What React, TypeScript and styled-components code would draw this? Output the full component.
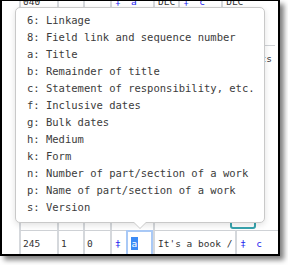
import { createGlobalStyle, styled } from "styled-components";

const GlobalStyle = createGlobalStyle`
  html, body {
    margin: 0;
    padding: 0;
    background: #fff;
  }
  body {
    font-family: "DejaVu Sans Mono", "Liberation Mono", monospace;
  }
`;

const Page = styled.div`
  width: 288px;
  height: 265px;
  overflow: hidden;
  background: #fff;
`;

const Frame = styled.div`
  position: relative;
  width: 280px;
  height: 256px;
  box-sizing: border-box;
  border: 2px solid #000;
  border-top-width: 1px;
  background: #fff;
  overflow: hidden;
  box-shadow: 4px 4px 5px rgba(0, 0, 0, 0.5);
`;

const Rows = styled.div`
  display: flex;
  flex-direction: column;
  margin-top: -13px;
  font-family: "DejaVu Sans Mono", "Liberation Mono", monospace;
  font-size: 9.5px;
  color: #333;
`;

const Row = styled.div<{ $h: number }>`
  display: flex;
  height: ${(p) => p.$h}px;
  padding-left: 17px;
  box-sizing: border-box;
`;

const Cell = styled.div<{ $w?: number }>`
  display: flex;
  align-items: center;
  flex: none;
  box-sizing: border-box;
  width: ${(p) => (p.$w ? `${p.$w}px` : "auto")};
  border-top: 1px solid #cfd2d6;
  border-left: 2px solid #d5d8dc;
  padding: 0 3px 0 2px;
  white-space: pre;
`;

const Delim = styled(Cell)`
  width: 16px;
  padding-left: 3px;
  color: #1f1ff0;
`;

const Code = styled(Cell)<{ $focus?: boolean }>`
  width: 27px;
  border-left: none;
  padding-left: 5px;
  color: #1f1ff0;
  outline: ${(p) => (p.$focus ? "2px solid #a9c9f6" : "none")};
  outline-offset: -2px;
`;

const Value = styled(Cell)`
  padding: 0 3px;
`;

const Selected = styled.span`
  display: inline-block;
  height: 13px;
  line-height: 13px;
  padding: 0 0.5px;
  background: #3b8bf6;
  color: #fff;
`;

const AddButton = styled.div`
  flex: none;
  align-self: flex-end;
  width: 26px;
  height: 21px;
  margin-bottom: 1px;
  box-sizing: border-box;
  border: 2px solid #37a4ae;
  border-radius: 3px;
`;

const Popup = styled.div`
  position: absolute;
  left: 13px;
  top: 6px;
  width: 250px;
  box-sizing: border-box;
  padding: 4px 11px 6px;
  background: #fff;
  border: 1px solid #c9c9c9;
  border-radius: 5px;
  box-shadow: 0 2px 6px rgba(0, 0, 0, 0.12);
  font-family: "DejaVu Sans Mono", "Liberation Mono", monospace;
  font-size: 10.5px;
  line-height: 17px;
  color: #3c3c3c;

  &::before,
  &::after {
    content: "";
    position: absolute;
    top: 100%;
    width: 0;
    height: 0;
    border-style: solid;
    border-color: transparent;
  }
  &::before {
    left: 117px;
    border-width: 7px 7px 0;
    border-top-color: #c9c9c9;
  }
  &::after {
    left: 118px;
    border-width: 6px 6px 0;
    border-top-color: #fff;
  }
`;

const Option = styled.div`
  white-space: pre;
`;

type Sub = { code: string; value: string; focus?: boolean };
type Field = {
  tag: string;
  i1: string;
  i2: string;
  h: number;
  subs: Sub[];
  add?: boolean;
};

const fields: Field[] = [
  { tag: "040", i1: "", i2: "", h: 26, subs: [{ code: "a", value: "DLC" }, { code: "c", value: "DLC" }] },
  { tag: "042", i1: "", i2: "", h: 31, subs: [{ code: "a", value: "pcc" }] },
  { tag: "050", i1: "0", i2: "0", h: 26, subs: [{ code: "a", value: "PZ7" }, { code: "b", value: "Receipts" }] },
  { tag: "082", i1: "0", i2: "4", h: 26, subs: [{ code: "a", value: "813/.54" }, { code: "2", value: "23" }] },
  { tag: "090", i1: "", i2: "", h: 26, subs: [{ code: "a", value: "PZ7.S65" }] },
  { tag: "092", i1: "", i2: "", h: 27, subs: [{ code: "a", value: "FIC" }] },
  { tag: "096", i1: "", i2: "", h: 27, subs: [{ code: "a", value: "J" }] },
  { tag: "099", i1: "", i2: "", h: 27, subs: [{ code: "a", value: "FIC SMI" }] },
  { tag: "100", i1: "1", i2: "", h: 26, subs: [{ code: "a", value: "Smith, John," }], add: true },
  { tag: "245", i1: "1", i2: "0", h: 26, subs: [{ code: "a", value: "It's a book /", focus: true }, { code: "c", value: "" }] },
];

const options = [
  "6: Linkage",
  "8: Field link and sequence number",
  "a: Title",
  "b: Remainder of title",
  "c: Statement of responsibility, etc.",
  "f: Inclusive dates",
  "g: Bulk dates",
  "h: Medium",
  "k: Form",
  "n: Number of part/section of a work",
  "p: Name of part/section of a work",
  "s: Version",
];

export default function App() {
  return (
    <Page>
      <GlobalStyle />
      <Frame>
        <Rows>
          {fields.map((f) => (
            <Row key={f.tag} $h={f.h}>
              <Cell $w={38}>{f.tag}</Cell>
              <Cell $w={26}>{f.i1}</Cell>
              <Cell $w={27}>{f.i2}</Cell>
              {f.subs.map((s, i) => (
                <SubField key={i} sub={s} />
              ))}
              {f.add ? <AddButton /> : null}
            </Row>
          ))}
        </Rows>
        <Popup>
          {options.map((o) => (
            <Option key={o}>{o}</Option>
          ))}
        </Popup>
      </Frame>
    </Page>
  );
}

function SubField({ sub }: { sub: Sub }) {
  return (
    <>
      <Delim>‡</Delim>
      <Code $focus={sub.focus}>
        {sub.focus ? <Selected>{sub.code}</Selected> : sub.code}
      </Code>
      {sub.value !== "" ? <Value>{sub.value}</Value> : null}
    </>
  );
}
